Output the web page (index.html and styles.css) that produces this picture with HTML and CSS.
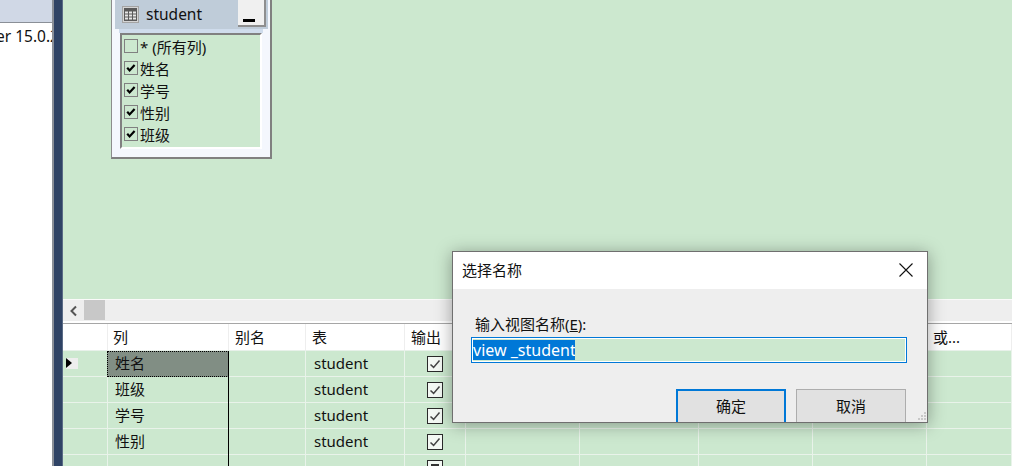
FILE: index.html
```html
<!DOCTYPE html>
<html lang="zh-CN">
<head>
<meta charset="utf-8">
<title>选择名称</title>
<link rel="stylesheet" href="styles.css">
</head>
<body>
<svg width="0" height="0" class="defs">
  <symbol id="tick" viewBox="0 0 14 14"><path d="M2.5 7.5 L5.6 10.4 L11.5 3.6" fill="none" stroke="#444" stroke-width="1.5"/></symbol>
  <symbol id="boldtick" viewBox="0 0 12 12"><path d="M2.2 5.8 L4.6 8.4 L9.6 3" fill="none" stroke="#000" stroke-width="2.2"/></symbol>
</svg>
<div class="app">
  <aside class="side">
    <div class="side-head"></div>
    <div class="side-body"><div class="side-text">er 15.0.2000</div></div>
  </aside>
  <div class="splitter"></div>
  <main class="main">
    <section class="canvas">
      <div class="tbl-win">
        <div class="tbl-title">
          <svg class="tbl-icon" width="17" height="17" viewBox="0 0 17 17">
            <rect x="0.5" y="0.5" width="16" height="16" fill="#d4d4d4" stroke="#a4a4a4"/>
            <rect x="2" y="2" width="13" height="13" fill="#5a5a5a"/>
            <path d="M3 5.5h3v2h-3zM7 5.5h3v2h-3zM11 5.5h3v2h-3zM3 8.5h3v2h-3zM7 8.5h3v2h-3zM11 8.5h3v2h-3zM3 11.5h3v2h-3zM7 11.5h3v2h-3zM11 11.5h3v2h-3z" fill="#e6e6e6"/>
          </svg>
          <span class="tbl-name">student</span>
          <div class="tbl-min"><i></i></div>
        </div>
        <div class="tbl-strip"></div>
        <div class="tbl-list">
          <div class="col-item"><span class="cb"></span><span>* (所有列)</span></div>
          <div class="col-item"><span class="cb"><svg width="12" height="12"><use href="#boldtick"/></svg></span><span>姓名</span></div>
          <div class="col-item"><span class="cb"><svg width="12" height="12"><use href="#boldtick"/></svg></span><span>学号</span></div>
          <div class="col-item"><span class="cb"><svg width="12" height="12"><use href="#boldtick"/></svg></span><span>性别</span></div>
          <div class="col-item"><span class="cb"><svg width="12" height="12"><use href="#boldtick"/></svg></span><span>班级</span></div>
        </div>
      </div>
    </section>
    <div class="hscroll">
      <svg class="sc-arrow" width="10" height="12" viewBox="0 0 10 12"><path d="M7 1.5 L2.5 6 L7 10.5" fill="none" stroke="#555" stroke-width="2"/></svg>
      <div class="sc-thumb"></div>
    </div>
    <div class="grid">
      <div class="row head">
        <div class="c first"></div><div class="c hname">列</div><div class="c">别名</div><div class="c">表</div><div class="c">输出</div>
        <div class="c"></div><div class="c"></div><div class="c"></div><div class="c"></div><div class="c">或...</div>
      </div>
      <div class="row">
        <div class="c rh"><span class="cur"><i></i></span></div><div class="c name sel">姓名</div><div class="c"></div><div class="c tn">student</div>
        <div class="c out"><span class="ob"><svg width="14" height="14"><use href="#tick"/></svg></span></div>
        <div class="c"></div><div class="c"></div><div class="c"></div><div class="c"></div><div class="c"></div>
      </div>
      <div class="row">
        <div class="c rh"></div><div class="c name">班级</div><div class="c"></div><div class="c tn">student</div>
        <div class="c out"><span class="ob"><svg width="14" height="14"><use href="#tick"/></svg></span></div>
        <div class="c"></div><div class="c"></div><div class="c"></div><div class="c"></div><div class="c"></div>
      </div>
      <div class="row">
        <div class="c rh"></div><div class="c name">学号</div><div class="c"></div><div class="c tn">student</div>
        <div class="c out"><span class="ob"><svg width="14" height="14"><use href="#tick"/></svg></span></div>
        <div class="c"></div><div class="c"></div><div class="c"></div><div class="c"></div><div class="c"></div>
      </div>
      <div class="row">
        <div class="c rh"></div><div class="c name">性别</div><div class="c"></div><div class="c tn">student</div>
        <div class="c out"><span class="ob"><svg width="14" height="14"><use href="#tick"/></svg></span></div>
        <div class="c"></div><div class="c"></div><div class="c"></div><div class="c"></div><div class="c"></div>
      </div>
      <div class="row">
        <div class="c rh"></div><div class="c name"></div><div class="c"></div><div class="c"></div>
        <div class="c out"><span class="ob part"><i></i></span></div>
        <div class="c"></div><div class="c"></div><div class="c"></div><div class="c"></div><div class="c"></div>
      </div>
    </div>
  </main>
</div>
<div class="dialog">
  <div class="dlg-title">
    <span>选择名称</span>
    <svg width="14" height="14" viewBox="0 0 14 14"><path d="M0.5 0.5 L13.5 13.5 M13.5 0.5 L0.5 13.5" stroke="#111" stroke-width="1.1" fill="none"/></svg>
  </div>
  <div class="dlg-body">
    <label class="dlg-label">输入视图名称(<u>E</u>):</label>
    <div class="dlg-input"><span class="dlg-sel">view _student</span></div>
    <div class="dlg-btns">
      <div class="btn primary">确定</div>
      <div class="btn">取消</div>
    </div>
    <svg class="grip" width="9" height="9" viewBox="0 0 9 9"><path d="M6 0h2v2H6zM3 3h2v2H3zM6 3h2v2H6zM0 6h2v2H0zM3 6h2v2H3zM6 6h2v2H6z" fill="#c8c8c8"/></svg>
  </div>
</div>
</body>
</html>
```

FILE: styles.css
```css
* { box-sizing: border-box; }
html, body { margin: 0; padding: 0; height: 100%; }
body {
  width: 1012px;
  height: 466px;
  overflow: hidden;
  position: relative;
  background: #cce8cf;
  font-family: "Noto Sans", "Noto Sans CJK SC", sans-serif;
  font-size: 15px;
  color: #111;
}
.defs { position: absolute; }
.app { display: flex; height: 466px; }

.side { width: 54px; flex: none; display: flex; flex-direction: column; background: #fff; border-right: 2px solid #8a8f97; }
.side-head { height: 23px; background: #d0d8e6; border-bottom: 1px solid #8a8f97; flex: none; }
.side-body { overflow: hidden; padding-top: 3px; }
.side-text { white-space: nowrap; line-height: 20px; font-size: 15.5px; margin-left: -4px; }

.splitter { width: 9px; flex: none; background: #2f4365; border-right: 1px solid #5a6b86; }

.main { flex: 1; display: flex; flex-direction: column; min-width: 0; }
.canvas { height: 299px; flex: none; position: relative; overflow: hidden; }

.tbl-win {
  position: absolute;
  left: 48px;
  top: 0;
  width: 161px;
  height: 159px;
  background: #f4f7fd;
  border-left: 1px solid #8c8c8c;
  border-right: 2px solid #808080;
  border-bottom: 2px solid #808080;
  padding: 0 2px 0 3px;
}
.tbl-title { height: 29px; background: #bfccd9; display: flex; align-items: center; padding: 0 2px 0 7px; }
.tbl-icon { flex: none; margin-bottom: 1px; }
.tbl-name { margin-left: 7px; margin-bottom: 2px; font-size: 15.5px; line-height: 20px; }
.tbl-min {
  margin-left: auto;
  width: 28px;
  height: 27px;
  align-self: flex-start;
  background: #f0f0f0;
  border-right: 2px solid #8e8e8e;
  border-bottom: 2px solid #8e8e8e;
  position: relative;
}
.tbl-min i { position: absolute; left: 5px; bottom: 3px; width: 12px; height: 3px; background: #000; }
.tbl-strip { height: 4px; margin: 0 5px 0 4px; background: #cfdcec; }
.tbl-list {
  margin: 0 6px 0 5px;
  height: 116px;
  background: #cce8cf;
  border-top: 2px solid #808080;
  border-left: 2px solid #808080;
  border-right: 2px solid #fff;
  border-bottom: 2px solid #fff;
  padding: 0 0 0 2px;
}
.col-item { height: 22px; display: flex; align-items: center; font-size: 15px; color: #111; }
.cb {
  width: 14px;
  height: 14px;
  flex: none;
  margin-right: 2px;
  border: 1px solid #808080;
  display: flex;
  align-items: center;
  justify-content: center;
}

.hscroll { height: 22px; flex: none; background: #eeeeee; border-top: 1px solid #fafafa; display: flex; align-items: center; padding-left: 5px; }
.sc-arrow { flex: none; margin-left: 1px; }
.sc-thumb { width: 21px; height: 20px; margin-left: 5px; background: #c8c8c8; align-self: flex-start; }

.grid { flex: 1; background: #cce8cf; border-top: 2px solid #fff; box-shadow: inset 0 1px 0 #a6a6a6; padding-top: 1px; }
.row { display: grid; grid-template-columns: 45px 121px 77px 99px 61px 114px 119px 114px 114px 85px; height: 26px; border-bottom: 1px solid #e9f3ea; }
.row.head { background: #fff; height: 27px; border-bottom: 1px solid #e8f1ea; }
.c { border-right: 1px solid #e9f3ea; font-size: 15px; line-height: 25px; padding-left: 6px; white-space: nowrap; overflow: hidden; }
.head .c { border-right-color: #eeeeee; line-height: 26px; }
.c.hname { padding-left: 5px; }
.c.name { padding-left: 8px; border-right: 1px solid #000; margin-left: -1px; margin-bottom: -1px; }
.c.tn { padding-left: 8px; }
.c.rh { padding: 7px 0 0 3px; }
.cur { display: block; width: 12px; height: 11px; background: #eeeeee; position: relative; }
.cur i { position: absolute; left: 0; top: 0; border-left: 6px solid #000; border-top: 5.5px solid transparent; border-bottom: 5.5px solid transparent; }
.c.sel { background: #818e84; outline: 1px dotted #000; outline-offset: -1px; }
.c.out { padding: 5px 0 0 22px; }
.ob { display: flex; width: 16px; height: 16px; border: 1px solid #2a2a2a; background: #f3f8f3; align-items: center; justify-content: center; }
.ob.part i { display: block; width: 8px; height: 8px; background: #333; }

.dialog {
  position: absolute;
  left: 452px;
  top: 251px;
  width: 476px;
  height: 172px;
  background: #eeeeee;
  border: 1px solid #6f6f6f;
  box-shadow: 0 2px 16px rgba(0, 0, 0, 0.35);
  overflow: hidden;
}
.dlg-title { height: 37px; background: #fff; display: flex; align-items: center; justify-content: space-between; padding: 0 14px 2px 9px; font-size: 15px; }
.dlg-body { padding: 25px 20px 0 18px; position: relative; height: 133px; }
.dlg-label { display: block; font-size: 15px; line-height: 21px; padding-left: 4px; }
.dlg-input { margin-top: 2px; height: 26px; border: 1px solid #0078d7; background: #cce8cf; box-shadow: inset 0 0 0 1px #fff; padding: 2px 0 0 1px; font-size: 16px; line-height: 20px; display: flex; }
.dlg-sel { background: #0078d7; color: #fff; display: block; height: 20px; line-height: 20px; width: 102px; overflow: hidden; white-space: nowrap; }
.dlg-btns { display: flex; justify-content: flex-end; gap: 10px; margin-top: 26px; margin-right: 1px; }
.btn { width: 110px; height: 36px; flex: none; background: #e1e1e1; border: 1px solid #adadad; font-size: 15px; text-align: center; line-height: 33px; }
.btn.primary { border: 2px solid #0078d7; line-height: 31px; }
.grip { position: absolute; right: 0; bottom: 1px; }
```
